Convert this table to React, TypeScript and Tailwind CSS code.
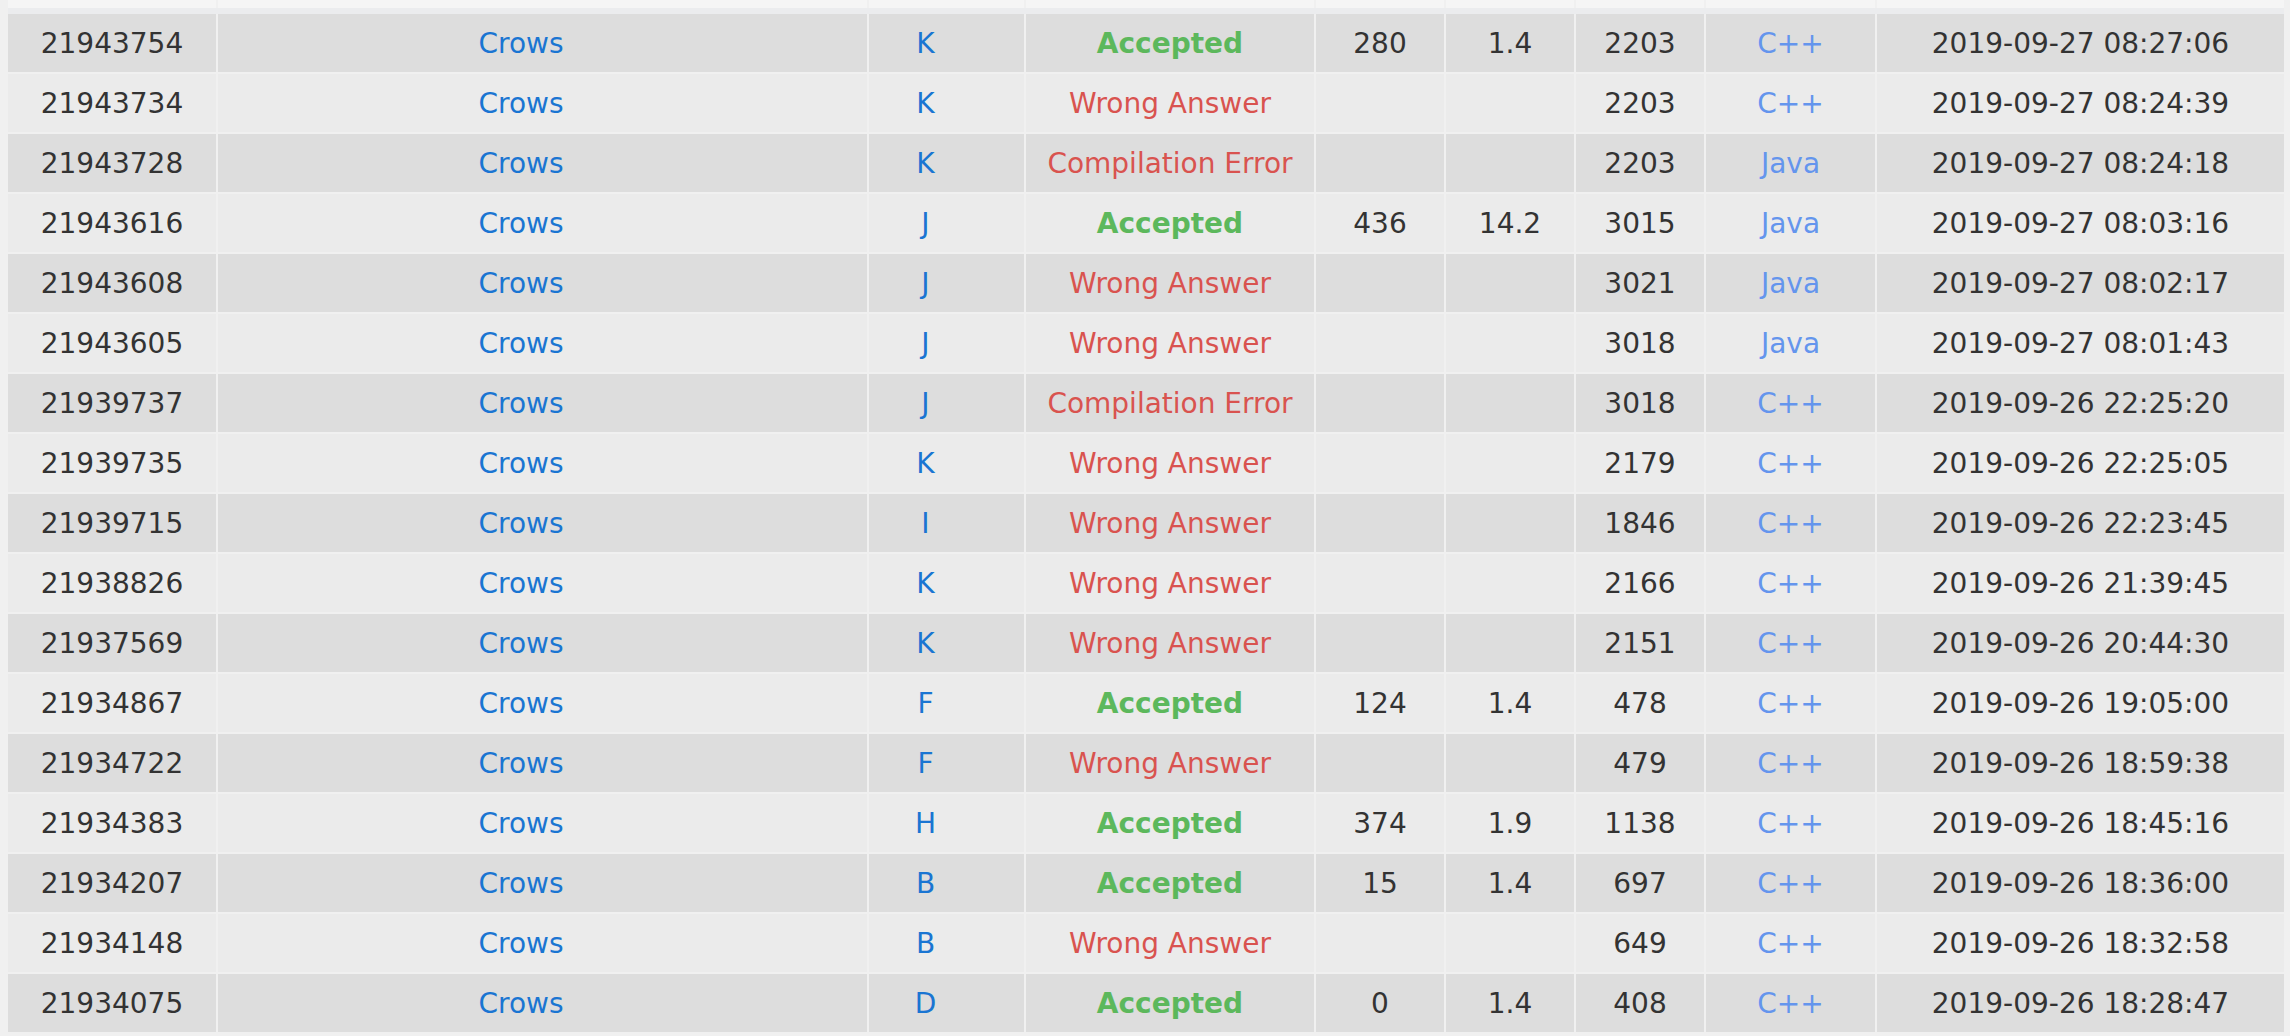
type Status = "ac" | "wa" | "ce";

interface Submission {
  id: string;
  problem: string;
  status: Status;
  time: string;
  memory: string;
  length: string;
  lang: string;
  submitted: string;
}

const rows: Submission[] = [
  { id: "21943754", problem: "K", status: "ac", time: "280", memory: "1.4", length: "2203", lang: "C++", submitted: "2019-09-27 08:27:06" },
  { id: "21943734", problem: "K", status: "wa", time: "", memory: "", length: "2203", lang: "C++", submitted: "2019-09-27 08:24:39" },
  { id: "21943728", problem: "K", status: "ce", time: "", memory: "", length: "2203", lang: "Java", submitted: "2019-09-27 08:24:18" },
  { id: "21943616", problem: "J", status: "ac", time: "436", memory: "14.2", length: "3015", lang: "Java", submitted: "2019-09-27 08:03:16" },
  { id: "21943608", problem: "J", status: "wa", time: "", memory: "", length: "3021", lang: "Java", submitted: "2019-09-27 08:02:17" },
  { id: "21943605", problem: "J", status: "wa", time: "", memory: "", length: "3018", lang: "Java", submitted: "2019-09-27 08:01:43" },
  { id: "21939737", problem: "J", status: "ce", time: "", memory: "", length: "3018", lang: "C++", submitted: "2019-09-26 22:25:20" },
  { id: "21939735", problem: "K", status: "wa", time: "", memory: "", length: "2179", lang: "C++", submitted: "2019-09-26 22:25:05" },
  { id: "21939715", problem: "I", status: "wa", time: "", memory: "", length: "1846", lang: "C++", submitted: "2019-09-26 22:23:45" },
  { id: "21938826", problem: "K", status: "wa", time: "", memory: "", length: "2166", lang: "C++", submitted: "2019-09-26 21:39:45" },
  { id: "21937569", problem: "K", status: "wa", time: "", memory: "", length: "2151", lang: "C++", submitted: "2019-09-26 20:44:30" },
  { id: "21934867", problem: "F", status: "ac", time: "124", memory: "1.4", length: "478", lang: "C++", submitted: "2019-09-26 19:05:00" },
  { id: "21934722", problem: "F", status: "wa", time: "", memory: "", length: "479", lang: "C++", submitted: "2019-09-26 18:59:38" },
  { id: "21934383", problem: "H", status: "ac", time: "374", memory: "1.9", length: "1138", lang: "C++", submitted: "2019-09-26 18:45:16" },
  { id: "21934207", problem: "B", status: "ac", time: "15", memory: "1.4", length: "697", lang: "C++", submitted: "2019-09-26 18:36:00" },
  { id: "21934148", problem: "B", status: "wa", time: "", memory: "", length: "649", lang: "C++", submitted: "2019-09-26 18:32:58" },
  { id: "21934075", problem: "D", status: "ac", time: "0", memory: "1.4", length: "408", lang: "C++", submitted: "2019-09-26 18:28:47" },
];

const statusText: Record<Status, string> = {
  ac: "Accepted",
  wa: "Wrong Answer",
  ce: "Compilation Error",
};

// column template shared by every row (2px gaps = cell borders)
const cols = "grid grid-cols-[208px_649px_155px_288px_128px_128px_128px_169px_407px] gap-x-[2px]";

function Cell({ children, className = "" }: { children?: React.ReactNode; className?: string }) {
  return <div className={`flex items-center justify-center whitespace-nowrap pt-[2px] ${className}`}>{children}</div>;
}

function Row({ s, dark }: { s: Submission; dark: boolean }) {
  const bg = dark ? "bg-[#dddddd]" : "bg-[#ebebeb]";
  return (
    <div className={`${cols} h-[58px]`}>
      <Cell className={`${bg} text-[#333333]`}>{s.id}</Cell>
      <Cell className={`${bg} text-[#1a75d2] pr-[43px]`}>Crows</Cell>
      <Cell className={`${bg} text-[#1a75d2] pr-[42px]`}>{s.problem}</Cell>
      <Cell
        className={`${bg} ${
          s.status === "ac" ? "font-bold text-[#5cb85c]" : "text-[#d9534f]"
        }`}
      >
        {statusText[s.status]}
      </Cell>
      <Cell className={`${bg} text-[#333333]`}>{s.time}</Cell>
      <Cell className={`${bg} text-[#333333]`}>{s.memory}</Cell>
      <Cell className={`${bg} text-[#333333]`}>{s.length}</Cell>
      <Cell className={`${bg} text-[#6495ed]`}>{s.lang}</Cell>
      <Cell className={`${bg} text-[#333333]`}>{s.submitted}</Cell>
    </div>
  );
}

export default function App() {
  return (
    <div className="w-[2290px] h-[1036px] overflow-hidden bg-[#f0f0f0] pl-[8px] font-['DejaVu_Sans',Verdana,sans-serif] text-[28px] leading-none">
      {/* tail of the previous row, cut off at the top edge */}
      <div className={`${cols} h-[8px]`}>
        {Array.from({ length: 9 }).map((_, i) => (
          <div key={i} className="bg-[#f5f5f5]" />
        ))}
      </div>
      <div className="h-[6px] bg-[#ebecee] w-[2276px]" />
      <div className="flex flex-col gap-y-[2px]">
        {rows.map((s, i) => (
          <Row key={s.id} s={s} dark={i % 2 === 0} />
        ))}
      </div>
    </div>
  );
}
